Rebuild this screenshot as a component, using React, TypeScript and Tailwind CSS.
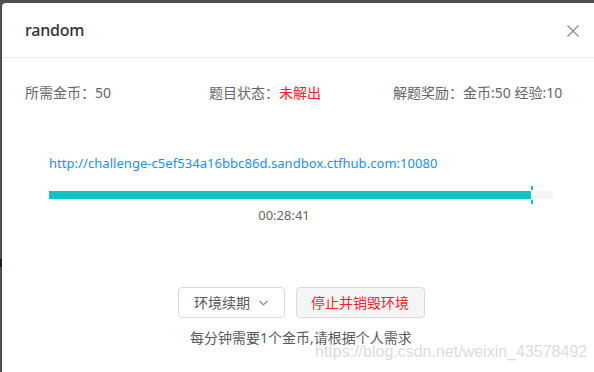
import React from "react";

export default function App() {
  const font = { fontFamily: '"Noto Sans", "Noto Sans CJK SC", sans-serif' };
  return (
    <div
      className="relative w-[594px] h-[372px] overflow-hidden bg-[#4f4f4f]"
      style={font}
    >
      <div className="absolute left-0 top-[259px] w-[2px] h-[8px] bg-[#1c1c28]" />
      <div className="ml-[2px] mt-[3px] w-[600px] h-[420px] bg-white rounded-tl-[4px]">
        {/* header */}
        <div className="h-[55px] border-b border-[#e8e8e8] flex items-center justify-between pl-[23px] pr-[23px]">
          <span className="text-[16px] font-medium text-[#333] leading-[22px] tracking-[-0.2px]">random</span>
          <svg width="12" height="12" viewBox="0 0 12 12" className="mt-[1px]">
            <path d="M0.5 0.5 L11.5 11.5 M11.5 0.5 L0.5 11.5" stroke="#8c8c8c" strokeWidth="1.3" fill="none" />
          </svg>
        </div>
        {/* body */}
        <div className="w-[552px] ml-[23px]">
          <div className="mt-[24px] grid grid-cols-3 text-[14px] leading-[22px] text-[#666]">
            <div>所需金币：50</div>
            <div>
              题目状态：<span className="text-[#f5222d]">未解出</span>
            </div>
            <div>解题奖励：金币:50 经验:10</div>
          </div>
          <div className="px-[24px]">
            <div className="mt-[48px] text-[13px] leading-[22px] text-[#1890ff] tracking-[0.05px]">
              http://challenge-c5ef534a16bbc86d.sandbox.ctfhub.com:10080
            </div>
            <div className="relative mt-[17px] h-[8px] bg-[#f5f5f5]">
              <div className="h-[8px] bg-[#13c2c2] w-[482px]" />
              <div className="absolute left-[482px] top-[-5px] w-[2px] h-[4px] bg-[#13c2c2]" />
              <div className="absolute left-[482px] top-[9px] w-[2px] h-[4px] bg-[#13c2c2]" />
            </div>
            <div className="mt-[5px] w-[470px] text-center text-[13px] leading-[22px] text-[#666]">
              00:28:41
            </div>
          </div>
          <div className="mt-[61px] flex justify-center gap-[11px]">
            <button className="h-[31px] w-[107px] flex items-center justify-center gap-[9px] rounded-[4px] border border-[#d9d9d9] bg-white text-[14px] text-[#595959]">
              <span>环境续期</span>
              <svg width="9" height="6" viewBox="0 0 9 6">
                <path d="M0.5 0.8 L4.5 4.8 L8.5 0.8" stroke="#777" strokeWidth="1.1" fill="none" />
              </svg>
            </button>
            <button className="h-[31px] w-[129px] flex items-center justify-center rounded-[4px] border border-[#d9d9d9] bg-[#f5f5f5] text-[14px] text-[#f5222d]">
              停止并销毁环境
            </button>
          </div>
          <div className="mt-[10px] text-center text-[14px] leading-[20px] text-[#595959]">
            每分钟需要1个金币,请根据个人需求
          </div>
        </div>
      </div>
      <div
        className="absolute left-[315px] top-[342px] text-[16px] leading-[20px] text-[#dcdcdc]"
        style={{ fontFamily: '"Liberation Sans", Arial, sans-serif' }}
      >
        https://blog.csdn.net/weixin_43578492
      </div>
    </div>
  );
}
